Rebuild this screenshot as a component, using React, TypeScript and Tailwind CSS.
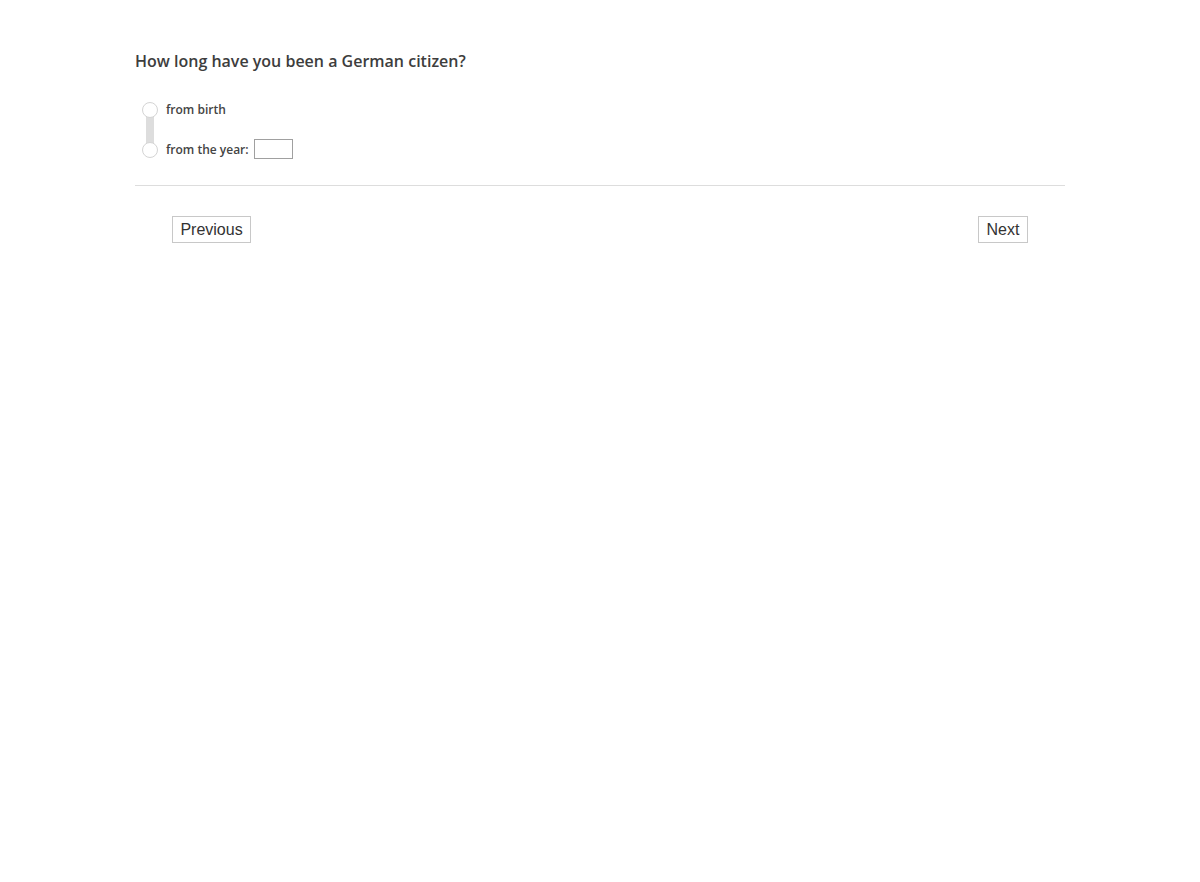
const options = [
  { id: "birth", label: "from birth", withYear: false },
  { id: "year", label: "from the year:", withYear: true },
];

function Radio() {
  return (
    <span className="relative z-10 block w-4 h-4 rounded-full border border-[#d4d4d4] bg-white" />
  );
}

export default function App() {
  return (
    <div className="min-h-screen bg-white font-['Open_Sans',sans-serif] text-[#444]">
      <div className="w-[930px] mx-auto pt-[50px]">
        <h2 className="text-[16px] font-semibold leading-[22px] text-[#3d3d3d]">
          How long have you been a German citizen?
        </h2>

        <div className="relative mt-[30px] ml-[7px] flex flex-col gap-[24px]">
          {/* connector between radios */}
          <span className="absolute left-[4px] top-[12px] w-2 h-[30px] bg-[#dddddd]" />
          {options.map((o) => (
            <label key={o.id} className="flex items-center h-4 gap-[8px]">
              <Radio />
              <span className="text-[12px] font-semibold text-[#444]">{o.label}</span>
              {o.withYear && (
                <input
                  type="text"
                  className="-ml-[3px] -translate-y-px w-[39px] h-[20px] border border-[#a0a0a0] bg-white outline-none"
                />
              )}
            </label>
          ))}
        </div>

        <div className="mt-[27px] border-t border-[#dddddd]" />

        <div className="flex justify-between px-[37px] mt-[30px]">
          <button className="h-[27px] w-[79px] border border-[#c8c8c8] bg-white font-['Liberation_Sans',Arial,sans-serif] text-[16px] text-[#333]">
            Previous
          </button>
          <button className="h-[27px] w-[50px] border border-[#c8c8c8] bg-white font-['Liberation_Sans',Arial,sans-serif] text-[16px] text-[#333]">
            Next
          </button>
        </div>
      </div>
    </div>
  );
}
